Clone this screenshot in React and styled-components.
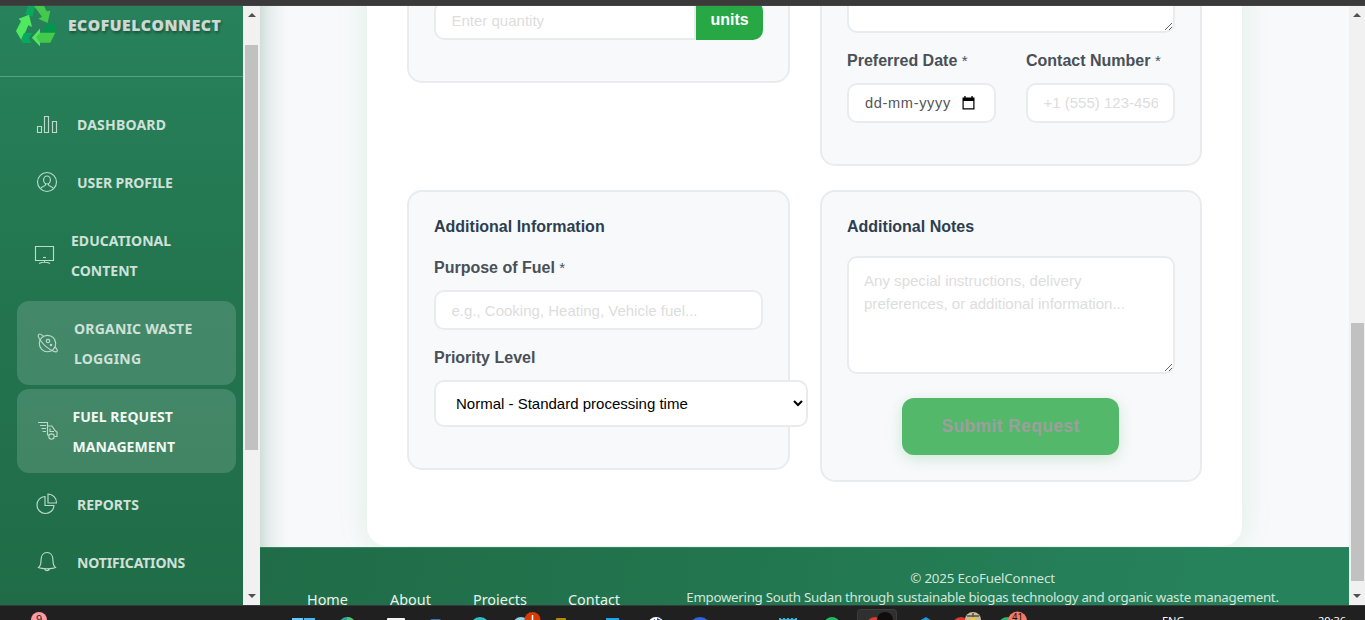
import React from "react";
import styled, { createGlobalStyle } from "styled-components";

const Global = createGlobalStyle`
  * { box-sizing: border-box; }
  html, body { margin: 0; padding: 0; overflow: hidden; }
  body { width: 1365px; height: 620px; font-family: "Liberation Sans", Arial, sans-serif; }
`;

const Screen = styled.div`
  width: 1365px; height: 620px; display: flex; flex-direction: column; overflow: hidden;
`;
const BrowserEdge = styled.div`
  height: 6px; flex: none; background: #3b3a3a; border-bottom: 1px solid #454343;
`;
const Viewport = styled.div`
  height: 599px; flex: none; display: flex; overflow: hidden;
`;

/* ---------- sidebar ---------- */
const Sidebar = styled.aside`
  width: 243px; flex: none; height: 599px; overflow: hidden;
  background: linear-gradient(180deg, #27825b 0%, #237650 42%, #206c48 100%);
  font-family: "Noto Sans", "Open Sans", sans-serif;
`;
const Brand = styled.div`
  height: 71px; display: flex; align-items: flex-start; padding-left: 14px;
  border-bottom: 1px solid rgba(255, 255, 255, 0.25);
`;
const BrandName = styled.span`
  margin: 8px 0 0 10px; font: 800 15.6px/22px "Open Sans", sans-serif; letter-spacing: 0.56px;
  color: #ced9d3; text-shadow: 1px 2px 3px rgba(0, 0, 0, 0.4); -webkit-text-stroke: 0.15px #ced9d3;
`;
const Nav = styled.nav`
  padding: 20px 7px 0 17px; display: flex; flex-direction: column; gap: 4px;
`;
const NavItem = styled.a`
  height: ${(p) => (p.$tall ? 84 : 54)}px; flex: none; display: flex; align-items: center;
  padding-left: ${(p) => p.$pad}px; gap: ${(p) => p.$gap}px; border-radius: 12px;
  background: ${(p) => (p.$on ? "rgba(255,255,255,0.15)" : "transparent")};
  color: ${(p) => (p.$bright ? "#f2f7f4" : "#cfe1d9")};
`;
const NavLabel = styled.span`
  font-size: 14px; font-weight: 700; line-height: 30px; padding-top: 2px; white-space: pre;
  letter-spacing: ${(p) => p.$ls || 0}px;
`;
const Glyph = styled.svg`
  width: 22px; height: 22px; flex: none; fill: none; stroke: #bdd8cc; stroke-width: 1.15;
`;

/* ---------- scrollbar ---------- */
const Track = styled.div`
  width: ${(p) => p.$w}px; flex: none; height: 599px; background: #f1f1f1;
  display: flex; flex-direction: column; align-items: center; padding: 7px 0 7px;
`;
const Thumb = styled.div`
  width: 13px; height: ${(p) => p.$h}px; margin-top: ${(p) => p.$top}px; background: #c1c1c1;
`;
const Arrow = styled.i`
  width: 0; height: 0; border: 4px solid transparent; border-top-width: 0;
  border-bottom: 4px solid #505050; flex: none;
  ${(p) => p.$down && "transform: rotate(180deg); margin-top: auto;"}
`;

/* ---------- main ---------- */
const Main = styled.main`
  width: 1089px; flex: none; position: relative; overflow: hidden; background: #f8f9fb;
`;
const EdgeShade = styled.div`
  position: absolute; left: 0; top: 0; width: 30px; height: 599px; z-index: 2;
  background: linear-gradient(90deg, rgba(31,111,74,0.19), rgba(31,111,74,0.09) 30%, rgba(31,111,74,0.02) 75%, transparent);
`;
const Card = styled.section`
  width: 875px; height: 580px; margin: -40px 0 0 107px; padding: 0 40px;
  background: #fff; border-radius: 20px; box-shadow: 0 0 30px rgba(40, 167, 69, 0.13);
`;
const Row = styled.div`
  display: grid; grid-template-columns: 383px 382px; column-gap: 30px; align-items: start;
  margin-bottom: 24px;
`;
const Panel = styled.div`
  height: ${(p) => p.$h}px; border: 2px solid #e9ecef; border-radius: 15px; background: #f8f9fb;
  padding: 24px 25px; display: flex; flex-direction: column;
  justify-content: ${(p) => (p.$end ? "flex-end" : "flex-start")};
`;
const Heading = styled.h3`
  margin: 1px 0 0; height: 19px; font-size: 16px; line-height: 20px; font-weight: 700; color: #2c3e50;
`;
const Label = styled.label`
  display: block; margin: ${(p) => p.$mt || 0}px 0 0; height: 19px; font-size: 16px; line-height: 20px;
  font-weight: 700; color: #495057; white-space: nowrap;
  span { font-weight: 400; font-size: 15px; }
`;
const Input = styled.input`
  width: 100%; height: ${(p) => p.$h || 40}px; margin: ${(p) => p.$mt || 0}px 0 0; padding: 0 15.5px ${(p) => p.$pb || 0}px;
  border: 2px solid #e9ecef; border-radius: 10px; background: #fff; outline: 0;
  font: 15px "Liberation Sans", Arial, sans-serif;
  &::placeholder { color: #dddddd; opacity: 1; }
`;
const DateBox = styled.div`
  height: 40px; margin-top: 13px; padding-left: 16px; display: flex; align-items: center; gap: 11px;
  border: 2px solid #e9ecef; border-radius: 10px; background: #fff; color: #565656;
  font-size: 14.6px; letter-spacing: 0.65px;
`;
const Area = styled.textarea`
  width: 328px; height: ${(p) => p.$h}px; flex: none; margin: ${(p) => p.$mt || 0}px 0 0; padding: 10.5px 15px;
  border: 2px solid #e9ecef; border-radius: 10px; background: #fff; outline: 0; resize: vertical;
  font: 15.05px/23px "Liberation Sans", Arial, sans-serif;
  &::placeholder { color: #dddddd; opacity: 1; }
`;
const Select = styled.select`
  width: 374px; height: 47px; flex: none; margin: 13px 0 0; padding: 0 1px 0 16px; border: 2px solid #e9ecef;
  border-radius: 10px; background: #fff; color: #000;
  font: 15px "Liberation Sans", Arial, sans-serif;
`;
const QuantityGroup = styled.div`
  display: flex; height: 39px; margin-bottom: 17px;
  input { border-radius: 10px 0 0 10px; width: 262px; height: 39px; }
`;
const Unit = styled.span`
  width: 67px; background: #28a745; border-radius: 0 10px 10px 0; color: #fff; padding-bottom: 2px;
  font-weight: 700; font-size: 16px; display: flex; align-items: center; justify-content: center;
`;
const Pair = styled.div`
  display: grid; grid-template-columns: 149px 149px; column-gap: 30px; margin: 18px 0 17px;
`;
const Submit = styled.button`
  width: 217px; height: 57px; flex: none; margin: 24px 0 0 55px; padding: 0;
  border: 0; border-radius: 12px; background: #53b86a; color: #9c9f9c;
  font: 700 17.6px "Liberation Sans", Arial, sans-serif; letter-spacing: 0.3px;
  box-shadow: 0 4px 15px rgba(40, 167, 69, 0.2);
`;

/* ---------- footer ---------- */
const Footer = styled.footer`
  position: relative; height: 80px; margin-top: 1px; display: flex; white-space: nowrap;
  background: linear-gradient(100deg, #206c48 0%, #22764f 45%, #26825b 85%, #26825b 100%);
  font-family: "Noto Sans", "Open Sans", sans-serif; border-top: 1px solid #3b8463;
`;
const Links = styled.div`
  display: grid; grid-template-columns: 83px 83px 95px 60px; margin: 41px 0 0 47px; width: 379px;
  font-size: 14.4px; line-height: 22px; color: #e9f3ee;
`;
const Legal = styled.div`
  width: 593px; padding-top: 21px; color: #d2e6dc; font-size: 13.3px; line-height: 19px;
`;
const LegalLine = styled.div`
  display: flex; justify-content: center; letter-spacing: ${(p) => p.$ls}px;
`;

/* ---------- taskbar ---------- */
const Taskbar = styled.div`
  height: 15px; flex: none; display: flex; background: #202020; border-top: 1px solid #383838; overflow: hidden;
  svg { flex: none; }
`;
const Widget = styled.div`width: 281px; flex: none; padding-left: 31px;`;
const Apps = styled.div`display: flex; width: 881px; flex: none;`;
const Status = styled.span`
  width: ${(p) => p.$w}px; flex: none; color: #fff; font: ${(p) => p.$size}px/15px "Noto Sans", sans-serif; padding-top: 7px; white-space: nowrap;
`;

const icons = {
  bars: <path d="M1.5 13.5h4v6h-4zM8.5 3.5h4v16h-4zM16.500 8.500h4v11h-4z" />,
  user: <><circle cx="11" cy="11" r="9.5" /><ellipse cx="11" cy="9" rx="3.4" ry="4" /><path d="M9.500 12.500v1.500c0 1-4 1.500-5 3.500M12.500 12.500v1.500c0 1 4 1.500 5 3.500" /></>,
  screen: <><path d="M1.500 2.500h18v14h-18zM5 19.500c3-1.500 8-1.500 11 0M10.500 16.500v2" /><path d="M9 13.500h3" /></>,
  planet: <><circle cx="10.500" cy="11.500" r="8.200" /><path d="M3.500 8.500C.8 5 .8 2.800 2 2.200c1.200-.7 2.500.2 4.500 2.300M3.500 8.500c3 4.200 8 8.500 12.500 10.500 3.500 1.500 4.600.8 4.200-.8-.3-1.200-1.200-2.200-2.200-3.200" /><circle cx="11" cy="9" r="1.700" /><circle cx="14" cy="13" r=".7" /></>,
  truck: <><path d="M1 2.500h9.500v12.500h1.500M3 5.500h6M4.500 8.500H9M5.500 11.500H9M10.500 6h4.500l3 4.500 2 1.500v4.500h-2.500" /><path d="M13 8.500v3h4" /><circle cx="14.500" cy="16.500" r="2.700" /></>,
  pie: <><path d="M9 3.500A8.500 8.500 0 1 0 18 12.500H9z" /><path d="M12 1v9h8.500A8.700 8.700 0 0 0 12 1z" /></>,
  bell: <path d="M2.500 16.500c2-1.500 2.500-2.500 2.500-7 0-5 2.500-8 6-8s6 3 6 8c0 4.500.5 5.500 2.500 7-2 1-5 1.200-8.500 1.200s-6.500-.2-8.500-1.200zM8.500 17.700c.5 2.500 4.200 2.500 5 0" />,
};

const items = [
  { icon: "bars", text: "DASHBOARD", pad: 19, gap: 19, ls: 0.2 },
  { icon: "user", text: "USER PROFILE", pad: 19, gap: 19, ls: -0.07 },
  { icon: "screen", text: "EDUCATIONAL\nCONTENT", pad: 17, gap: 15, tall: true, ls: 0.02 },
  { icon: "planet", text: "ORGANIC WASTE\nLOGGING", pad: 20, gap: 15, tall: true, on: true, ls: 0.2 },
  { icon: "truck", text: "FUEL REQUEST\nMANAGEMENT", pad: 20, gap: 13.500, tall: true, on: true, bright: true, ls: 0.05 },
  { icon: "pie", text: "REPORTS", pad: 19, gap: 19, ls: 0.02 },
  { icon: "bell", text: "NOTIFICATIONS", pad: 19, gap: 19, ls: -0.15 },
];

const Recycle = () => (
  <svg width="44" height="42" viewBox="42 18 132 126">
    <path fill="#0aa85c" d="M84 18h22L97 50 75 42z" />
    <path fill="#43c94b" d="M102 18h30l8 16 11-2-8 37-28-13 11-6z" />
    <path fill="#4fe85f" d="M56 56l31-12 9 37-11-5-20 46-17-29 15-29z" />
    <path fill="#0aa85c" d="M72 99h26l-12 14 9 16H68l-5-10z" />
    <path fill="#04974c" d="M136 78l25-12 7 25-5 7h-36z" />
    <path fill="#43c94b" d="M96 113l24-27v12h46l-15 30h-31v11z" />
    <path fill="#4fe85f" d="M96 113l24-27v12l-12 14 12 16v11z" />
  </svg>
);

const Calendar = () => (
  <svg width="13" height="14" viewBox="0 0 13 14" fill="#000">
    <path d="M.5 1.500h12V13.500H.5zM1.700 5v7.300h9.600V5z" fillRule="evenodd" />
    <path d="M2.300 0h1.300v2H2.300zM9.400 0h1.300v2H9.400z" />
  </svg>
);

const apps = [
  <><rect x="11" y="12" width="11" height="4" fill="#62ccf5" /><rect x="23" y="12" width="11" height="4" fill="#4ab8ee" /></>,
  <><circle cx="22" cy="19" r="8" fill="#2aa89a" /><path d="M22 11q6 0 8 5h-8z" fill="#57c06a" /></>,
  <rect x="17" y="12" width="18" height="5" rx="1" fill="#f5f5f5" />,
  <rect x="16" y="13" width="11" height="4" rx="2" fill="#3179b9" />,
  <circle cx="22" cy="21" r="10" fill="#2fbcc9" />,
  <><circle cx="19" cy="19" r="8" fill="#8fd0ec" /><circle cx="30.500" cy="14" r="8" fill="#d83b01" /><path d="M30.500 9v7" stroke="#fff" strokeWidth="1.500" /></>,
  <rect x="9" y="12" width="10" height="4" rx="1" fill="#b8860b" />,
  <rect x="15" y="12" width="13" height="4" fill="#1ca4ec" />,
  <><circle cx="21" cy="19" r="8" fill="#fff" /><path d="M17 15l3-2v3zM22 12l4 2-4 2z" fill="#1537c4" /></>,
  <circle cx="20" cy="22" r="11" fill="#2f66dc" />,
  null,
  <path d="M11 12h2v1h2v-1h2v1h2v-1h2v1h2v-1h2v1h2v-1h2v4H11z" fill="#39b3d8" />,
  <circle cx="19" cy="19" r="8" fill="#20ba5a" />,
  <><rect x=".500" y="3.500" width="39" height="16" rx="3" fill="#303030" stroke="#3d3d3d" /><circle cx="18" cy="20" r="9" fill="#d93a32" /><circle cx="28" cy="14" r="8" fill="#120d0d" /></>,
  <path d="M25 11l6 4H18z" fill="#229bd8" />,
  <><circle cx="16" cy="20" r="9" fill="#e03a2f" /><circle cx="28" cy="14" r="8" fill="#c9bd99" /><path d="M22 10h12M28 7v4" stroke="#5a5140" strokeWidth="1.500" /><circle cx="28" cy="15" r="3" fill="#f1cc28" /></>,
  <><circle cx="17" cy="20" r="9" fill="#27b86a" /><circle cx="27.500" cy="15" r="9.500" fill="#f47b63" /><text x="22" y="15.500" fontSize="10" fontFamily="Liberation Sans, sans-serif" fill="#201010">41</text></>,
];

function Scrollbar({ w, top, h }) {
  return <Track $w={w}><Arrow /><Thumb $top={top} $h={h} /><Arrow $down /></Track>;
}

export default function App() {
  return (
    <Screen>
      <Global />
      <BrowserEdge />
      <Viewport>
        <Sidebar>
          <Brand><Recycle /><BrandName>ECOFUELCONNECT</BrandName></Brand>
          <Nav>
            {items.map((it) => (
              <NavItem key={it.icon} $tall={it.tall} $on={it.on} $bright={it.bright} $pad={it.pad} $gap={it.gap}>
                <Glyph viewBox="0 0 22 22">{icons[it.icon]}</Glyph>
                <NavLabel $ls={it.ls}>{it.text}</NavLabel>
              </NavItem>
            ))}
          </Nav>
        </Sidebar>
        <Scrollbar w={17} top={28} h={405} />
        <Main>
          <Card>
            <Row>
              <Panel $h={117} $end>
                <QuantityGroup><Input placeholder="Enter quantity" /><Unit>units</Unit></QuantityGroup>
              </Panel>
              <Panel $h={200} $end>
                <Area $h={80} />
                <Pair>
                  <div><Label>Preferred Date <span>*</span></Label><DateBox>dd-mm-yyyy<Calendar /></DateBox></div>
                  <div><Label>Contact Number <span>*</span></Label><Input $mt={13} $pb={2} placeholder="+1 (555) 123-4567" /></div>
                </Pair>
              </Panel>
            </Row>
            <Row>
              <Panel $h={280}>
                <Heading>Additional Information</Heading>
                <Label $mt={22}>Purpose of Fuel <span>*</span></Label>
                <Input $mt={13} placeholder="e.g., Cooking, Heating, Vehicle fuel..." />
                <Label $mt={18}>Priority Level</Label>
                <Select><option>Normal - Standard processing time</option></Select>
              </Panel>
              <Panel $h={292}>
                <Heading>Additional Notes</Heading>
                <Area $h={118} $mt={20} placeholder="Any special instructions, delivery preferences, or additional information..." />
                <Submit>Submit Request</Submit>
              </Panel>
            </Row>
          </Card>
          <Footer>
            <Links><span>Home</span><span>About</span><span>Projects</span><span>Contact</span></Links>
            <Legal>
              <LegalLine $ls={-0.15}>© 2025 EcoFuelConnect</LegalLine>
              <LegalLine $ls={-0.29}>Empowering South Sudan through sustainable biogas technology and organic waste management.</LegalLine>
            </Legal>
          </Footer>
          <EdgeShade />
        </Main>
        <Scrollbar w={16} top={306} h={258} />
      </Viewport>
      <Taskbar>
        <Widget>
          <svg width="16" height="15" viewBox="0 0 16 15"><circle cx="8" cy="14" r="8" fill="#ff99a4" /><text x="5" y="17" fontSize="11" fontFamily="Liberation Sans, sans-serif" fill="#222">9</text></svg>
        </Widget>
        <Apps>{apps.map((a, i) => <svg key={i} width="44.3" height="15" viewBox="0 0 44.3 15">{a}</svg>)}</Apps>
        <Status $w={156} $size={11}>ENG</Status>
        <Status $w={40} $size={11}>20:36</Status>
      </Taskbar>
    </Screen>
  );
}
